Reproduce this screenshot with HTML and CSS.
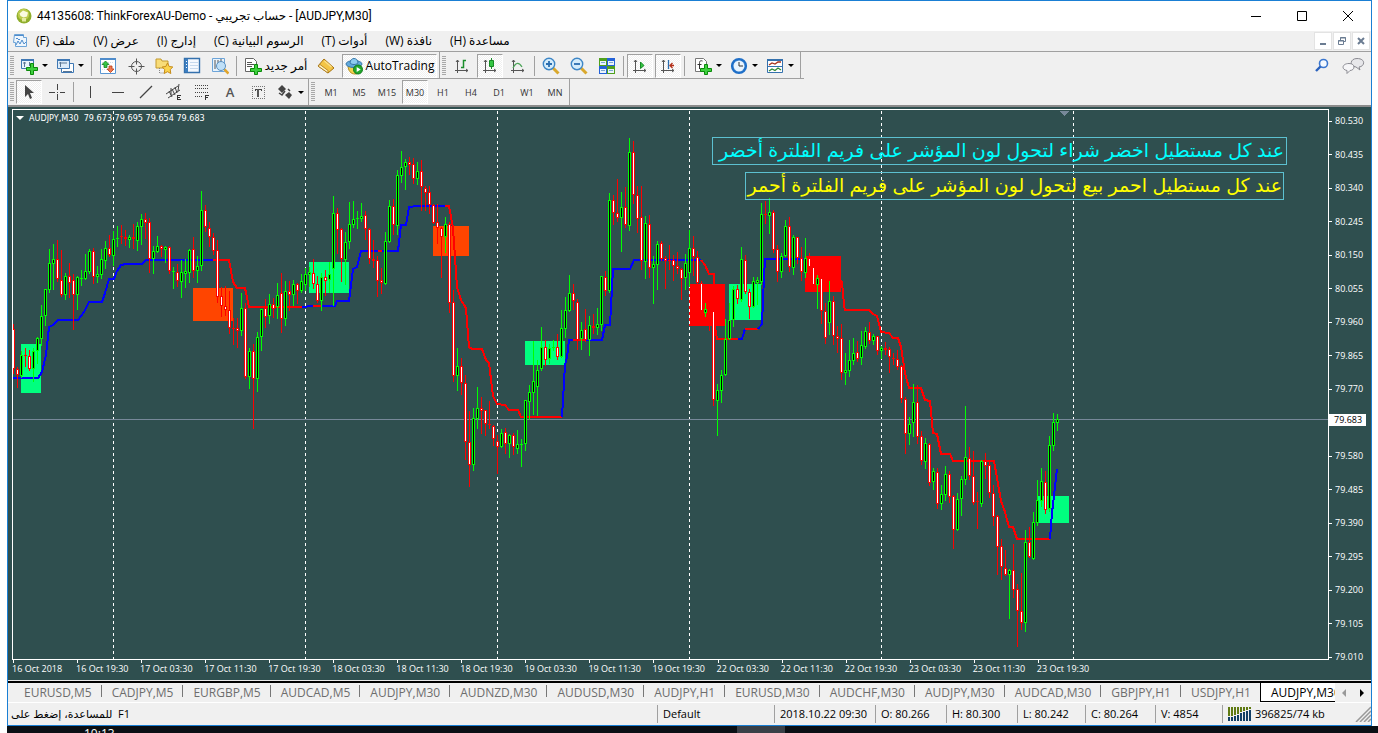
FILE: index.html
```html
<!DOCTYPE html>
<html lang="ar">
<head>
<meta charset="utf-8">
<title>44135608: ThinkForexAU-Demo - [AUDJPY,M30]</title>
<link rel="stylesheet" href="styles.css">
</head>
<body>
<div class="window">
  <header class="titlebar">
    <svg class="app-icon" viewBox="0 0 16 16"><circle cx="8" cy="8" r="7.500" fill="#8fae2c"/><circle cx="7.500" cy="6.500" r="5.700" fill="#bccb4c"/><path d="M3.500 5.500l3.500-3 5 2-1 4-3.500 1-3-1.500z" fill="#fafbe0"/><path d="M6 10h4v3.500H6z" fill="#e4eba0"/></svg>
    <h1 class="title">44135608: ThinkForexAU-Demo - حساب تجريبي - [AUDJPY,M30]</h1>
    <div class="caption">
      <button class="cap" aria-label="Minimize"><svg viewBox="0 0 12 12"><path d="M1 6.500h10" stroke="#000"/></svg></button>
      <button class="cap" aria-label="Maximize"><svg viewBox="0 0 12 12"><path d="M1.500 1.500h9v9h-9z" fill="none" stroke="#000"/></svg></button>
      <button class="cap" aria-label="Close"><svg viewBox="0 0 12 12"><path d="M1 1l10 10M11 1L1 11" stroke="#000"/></svg></button>
    </div>
  </header>

  <nav class="menubar">
    <svg class="doc-icon" viewBox="0 0 16 16"><path d="M2.500 1.500h9v3h3v9h-11v-4h-2z" fill="#eef6fd" stroke="#6da4d8"/><path d="M2.500 2.500h9M4 12l2-4 2 3 2-4 2 4 2-2M4 6l1-1 2 2 1-1" fill="none" stroke="#4f8ccb"/></svg>
    <button class="menu" dir="rtl">ملف (F)</button>
    <button class="menu" dir="rtl">عرض (V)</button>
    <button class="menu" dir="rtl">إدارج (I)</button>
    <button class="menu" dir="rtl">الرسوم البيانية (C)</button>
    <button class="menu" dir="rtl">أدوات (T)</button>
    <button class="menu" dir="rtl">نافذة (W)</button>
    <button class="menu" dir="rtl">مساعدة (H)</button>
    <div class="mdi">
      <button class="mdi-btn" aria-label="Minimize chart"><svg viewBox="0 0 10 10"><path d="M2 8h6" stroke="#6b7c92" stroke-width="2"/></svg></button>
      <button class="mdi-btn" aria-label="Restore chart"><svg viewBox="0 0 10 10"><path d="M3.500 4V1.500h5v4H7M1.500 4.500h5v4h-5zM1 5h6M3 2h6" fill="none" stroke="#6b7c92"/></svg></button>
      <button class="mdi-btn" aria-label="Close chart"><svg viewBox="0 0 10 10"><path d="M2 2l6 6M8 2L2 8" stroke="#6b7c92" stroke-width="2"/></svg></button>
    </div>
  </nav>

  <div class="tools">
    <div class="bar">
      <i class="grip"></i>
      <button class="tool drop" aria-label="New chart"><svg viewBox="0 0 18 18"><path d="M1.500 2.500h12v9h-12z" fill="#e8f3fc" stroke="#3f78b4"/><path d="M1 3h13" stroke="#3f78b4" stroke-width="2"/><path d="M4.500 5v5M3 6h3M9.500 5v4" stroke="#5b7794"/><path d="M10.500 6.500h3v4h4v3h-4v4h-3v-4h-4v-3h4z" fill="#3ed03e" stroke="#0b8a0b"/></svg><i class="caret"></i></button>
      <button class="tool drop" aria-label="Profiles"><svg viewBox="0 0 18 18"><path d="M5.500 6.500h12v9h-12z" fill="#fff" stroke="#3f78b4"/><path d="M1.500 2.500h12v9h-12z" fill="#dcecfa" stroke="#3f78b4"/><path d="M1 3h13" stroke="#3f78b4" stroke-width="2"/><path d="M4.500 5v5M3 6h8M7 14.500h9" stroke="#5b7794"/></svg><i class="caret"></i></button>
      <i class="sep first"></i>
      <button class="tool" aria-label="Market watch"><svg viewBox="0 0 18 18"><path d="M1.500 1.500h15v15h-15z" fill="#fff" stroke="#5b97d3"/><path d="M1 2h16" stroke="#4f8ccb" stroke-width="2"/><path d="M3 5.500h12M3 12.500h12" stroke="#d3dfeb" stroke-dasharray="1 1"/><path d="M6.500 4l3.500 3.500H8v3H5v-3H3z" fill="#35c643" stroke="#157f20" stroke-width=".8"/><path d="M11.500 15.500L8 12h2V9h3v3h2z" fill="#f07a50" stroke="#b93a16" stroke-width=".8"/></svg></button>
      <button class="tool" aria-label="Data window"><svg viewBox="0 0 18 18" fill="none" stroke="#555"><circle cx="9.500" cy="9.500" r="5"/><path d="M9.500 1.500v6M9.500 11.500v6M1.500 9.500h6M11.500 9.500h6"/></svg></button>
      <button class="tool" aria-label="Navigator"><svg viewBox="0 0 18 18"><path d="M1 2h5l1 2h6v7H1z" fill="#f8dc78" stroke="#c39a2e"/><path d="M4.500 11v5h4" fill="none" stroke="#888" stroke-dasharray="1 1"/><path d="M12.500 6l1.700 3.500 3.600.5-2.600 2.600.6 3.900-3.300-1.800-3.300 1.800.6-3.900L7.200 10l3.600-.5z" fill="#fbd44e" stroke="#c58a17"/></svg></button>
      <button class="tool" aria-label="Terminal"><svg viewBox="0 0 18 18"><path d="M1.500 1.500h15v14h-15z" fill="#f4f9ff" stroke="#3571ad" stroke-width="1.400"/><path d="M2 2h3v13H2z" fill="#3d7fc2"/><path d="M7 5.500h8M7 8.500h8M7 11.500h8" stroke="#c5d9ee"/><path d="M3 4.500h1M3 7.500h1M3 10.500h1" stroke="#fff"/></svg></button>
      <button class="tool" aria-label="Strategy tester"><svg viewBox="0 0 18 18"><path d="M1.500 1.500h12v13h-12z" fill="#e8f3fc" stroke="#6da4d8"/><path d="M4 3v9M7 3v4M10 2v4" stroke="#555"/><circle cx="10" cy="9" r="4.500" fill="#bfe0f8" stroke="#5a8fbf"/><path d="M13.500 12.500l4 4" stroke="#e0a52c" stroke-width="2.500"/></svg></button>
      <i class="sep"></i>
      <button class="tool order"><svg viewBox="0 0 18 18"><path d="M1.500 1.500h8l3 3v10h-11z" fill="#fff" stroke="#666"/><path d="M3 5.500h5M3 7.500h7M3 9.500h5" stroke="#555"/><path d="M10.500 7.500h3v4h4v3h-4v3h-3v-3h-4v-3h4z" fill="#3ed03e" stroke="#0b8a0b"/></svg><span>أمر جديد</span></button>
      <button class="tool" aria-label="MetaEditor"><svg viewBox="0 0 18 18"><path d="M7 2l10 9-6 5L1 9z" fill="#f3c545" stroke="#a87412"/><path d="M1 9l10 7v-2.500L3 7.500z" fill="#fff3c0" stroke="#a87412" stroke-width=".8"/><path d="M7.500 4l7 6" stroke="#fbe08a" stroke-width="1.500"/></svg></button>
      <button class="tool auto pressed"><svg viewBox="0 0 18 18"><path d="M3 8c0 6 3 9 7 9s5-4 6-9z" fill="#f1d14d" stroke="#b88d1c"/><ellipse cx="9" cy="7" rx="8" ry="3.500" fill="#61a9dc" stroke="#3777a8"/><path d="M5 6c0-6 8-6 8 0-2 2-6 2-8 0z" fill="#8fcbf0" stroke="#3777a8"/><circle cx="13" cy="12.500" r="4.500" fill="#22a92c" stroke="#117a1b"/><path d="M11.700 10l4 2.500-4 2.500z" fill="#fff"/></svg><span>AutoTrading</span></button>
      <i class="edge"></i><i class="grip"></i>
      <button class="tool" aria-label="Bar chart"><svg viewBox="0 0 18 18" fill="none" stroke="#555"><path d="M4.500 3v13M2 13.500h13M3 5l1.500-2L6 5M13 12l2 1.500-2 1.500"/><path d="M8 10.500h2.500V3.500H13" stroke="#1c8e2c" stroke-width="1.500"/></svg></button>
      <button class="tool pressed" aria-label="Candlesticks"><svg viewBox="0 0 18 18" fill="none" stroke="#555"><path d="M4.500 3v13M2 13.500h13M3 5l1.500-2L6 5M13 12l2 1.500-2 1.500"/><path d="M10.500 1v11" stroke="#1c8e2c"/><path d="M8.500 3.500h4v6h-4z" fill="#35c643" stroke="#168a24"/></svg></button>
      <button class="tool" aria-label="Line chart"><svg viewBox="0 0 18 18" fill="none" stroke="#555"><path d="M4.500 3v13M2 13.500h13M3 5l1.500-2L6 5M13 12l2 1.500-2 1.500"/><path d="M4 11c3-6 6-6 9-1" stroke="#4ba457" stroke-width="1.300"/></svg></button>
      <i class="sep"></i>
      <button class="tool" aria-label="Zoom in"><svg viewBox="0 0 18 18"><path d="M11 11l5.500 5.500" stroke="#d9a82d" stroke-width="3"/><circle cx="7" cy="7" r="5.700" fill="#d4ecfb" stroke="#3d86c6" stroke-width="1.400"/><path d="M4 7h6M7 4v6" stroke="#2b6eb0" stroke-width="1.800"/></svg></button>
      <button class="tool" aria-label="Zoom out"><svg viewBox="0 0 18 18"><path d="M11 11l5.500 5.500" stroke="#d9a82d" stroke-width="3"/><circle cx="7" cy="7" r="5.700" fill="#d4ecfb" stroke="#3d86c6" stroke-width="1.400"/><path d="M4 7h6" stroke="#2b6eb0" stroke-width="1.800"/></svg></button>
      <button class="tool" aria-label="Tile windows"><svg viewBox="0 0 18 18"><path d="M1 1h8v8H1zM9 9h8v8H9z" fill="#4fa01c"/><path d="M9 1h8v8H9zM1 9h8v8H1z" fill="#2361d8"/><path d="M2 4h6v4H2zM10 4h6v4h-6zM2 12h6v4H2zM10 12h6v4h-6z" fill="#eaf2fb"/><path d="M3 5.500h4M11 5.500h4M3 13.500h4M11 13.500h4" stroke="#7da7cf"/></svg></button>
      <i class="sep"></i>
      <button class="tool pressed" aria-label="Auto scroll"><svg viewBox="0 0 18 18" fill="none" stroke="#555"><path d="M4.500 3v13M2 13.500h13M3 5l1.500-2L6 5M13 12l2 1.500-2 1.500"/><path d="M9.500 5l3.500 3.500-3.500 3z" fill="#35c643" stroke="#168a24"/></svg></button>
      <button class="tool pressed" aria-label="Chart shift"><svg viewBox="0 0 18 18" fill="none" stroke="#555"><path d="M4.500 3v13M2 13.500h13M3 5l1.500-2L6 5M13 12l2 1.500-2 1.500"/><path d="M9.500 3v9" stroke="#2b6eb0" stroke-width="1.300"/><path d="M15 8.500h-4M13.500 6L11 8.500l2.500 2.500" stroke="#b4301a" stroke-width="1.300"/></svg></button>
      <i class="sep wide"></i>
      <button class="tool drop" aria-label="Indicators"><svg viewBox="0 0 18 18"><path d="M1.500 1.500h8l3 3v10h-11z" fill="#fff" stroke="#777"/><path d="M8.500 4c-3-1-3 1-3 3v5M3.500 7.500h4" fill="none" stroke="#333"/><path d="M10.500 7.500h3v4h4v3h-4v3h-3v-3h-4v-3h4z" fill="#3ed03e" stroke="#0b8a0b"/></svg><i class="caret"></i></button>
      <button class="tool drop" aria-label="Periods"><svg viewBox="0 0 18 18"><circle cx="9" cy="9" r="6.800" fill="#eaf5ff" stroke="#1f6fc8" stroke-width="2.600"/><path d="M9 5v4h4" fill="none" stroke="#333"/><circle cx="9" cy="9" r="5.500" fill="none" stroke="#8bb9e6" stroke-dasharray="1 3.300"/></svg><i class="caret"></i></button>
      <button class="tool drop" aria-label="Templates"><svg viewBox="0 0 18 18"><path d="M1.500 2.500h15v13h-15z" fill="#fff" stroke="#3571ad"/><path d="M1 3h16" stroke="#3571ad" stroke-width="2"/><path d="M2 9.500h14" stroke="#3571ad"/><path d="M3 8l3-2 3 1 3-2h3" fill="none" stroke="#a8321c" stroke-width="1.300"/><path d="M3 14l3-2 3 1.500 3-2.500 3 2" fill="none" stroke="#2f8b35" stroke-width="1.300"/></svg><i class="caret"></i></button>
      <i class="edge"></i>
      <div class="right-tools">
        <button class="tool" aria-label="Search"><svg viewBox="0 0 18 18"><circle cx="10.500" cy="6.500" r="4" fill="#f4f9ff" stroke="#3b77cf" stroke-width="1.600"/><path d="M7.500 9.500L3 14" stroke="#2b62bd" stroke-width="2.400"/></svg></button>
        <button class="tool chat" aria-label="Messages"><svg viewBox="0 0 24 18"><path d="M15 1.500c9 0 8 8 2 8.500l1 3-4-3c-7-1-6-8.500 1-8.500z" fill="#e7e7ea" stroke="#8b8b92"/><path d="M7 6.500c7 0 6 7 1 7l-3 3v-3c-6-1-5-7 2-7z" fill="#f6f6f8" stroke="#8b8b92"/></svg></button>
      </div>
    </div>
    <div class="bar">
      <i class="grip"></i>
      <button class="tool pressed cursor" aria-label="Cursor"><svg viewBox="0 0 18 18"><path d="M5 2v12l3-3 2 5 2-1-2-5h4z" fill="#444"/></svg></button>
      <button class="tool" aria-label="Crosshair"><svg viewBox="0 0 18 18"><path d="M9.500 1v6M9.500 11v6M1 9.500h6M12 9.500h5M9 9.500h1" stroke="#444"/></svg></button>
      <i class="sep"></i>
      <button class="tool" aria-label="Vertical line"><svg viewBox="0 0 18 18"><path d="M9.500 3v12" stroke="#444"/></svg></button>
      <button class="tool" aria-label="Horizontal line"><svg viewBox="0 0 18 18"><path d="M3 9.500h12" stroke="#444"/></svg></button>
      <button class="tool" aria-label="Trendline"><svg viewBox="0 0 18 18"><path d="M3 15L15 3" stroke="#444" stroke-width="1.200"/></svg></button>
      <button class="tool" aria-label="Channel"><svg viewBox="0 0 18 18"><path d="M1 11L13 3M3 15l12-8M4 8l3 6M7 6l3 6M10 4l2 6M14 1l-1 7M6 5v7" stroke="#444"/><path d="M12.500 12v5M12 12.500h4M12 14.500h3M12 16.500h4" stroke="#333"/></svg></button>
      <button class="tool" aria-label="Fibonacci"><svg viewBox="0 0 18 18"><path d="M2 2.500h14M2 5.500h14M2 9.500h14M2 13.500h8" stroke="#444" stroke-dasharray="1 1"/><path d="M12.500 12v5M12 12.500h4M12 14.500h3" stroke="#333"/></svg></button>
      <button class="tool letter">A</button>
      <button class="tool" aria-label="Text label"><svg viewBox="0 0 18 18" shape-rendering="crispEdges"><path d="M3 3.500h13M3 15.500h13M3.500 3v13M15.500 3v13" fill="none" stroke="#777" stroke-dasharray="1 1"/><path d="M6 6.500h7M9.500 6v8M6.500 6v2M12.500 6v2" stroke="#444"/><path d="M8 6h2v8H8z" fill="#555"/></svg></button>
      <button class="tool drop" aria-label="Arrows"><svg viewBox="0 0 18 18"><path d="M2 6l4-4 4 4-4 4zM9 12l4-3 3 3-3 4z" fill="#444"/><path d="M3 10l3 2 3-4M12 6l2 2" fill="none" stroke="#444" stroke-width="1.500"/></svg><i class="caret"></i></button>
      <i class="edge"></i><i class="grip"></i>
      <button class="tool tf">M1</button><button class="tool tf">M5</button><button class="tool tf">M15</button><button class="tool tf pressed">M30</button><button class="tool tf">H1</button><button class="tool tf">H4</button><button class="tool tf">D1</button><button class="tool tf">W1</button><button class="tool tf">MN</button>
      <i class="edge"></i>
    </div>
  </div>

  <main class="chart">
    <div class="plot">
      <svg id="plot" class="plot-svg" viewBox="12 109 1317 551" preserveAspectRatio="none"></svg>
      <p class="symbol"><i class="caret light"></i><span>AUDJPY,M30&nbsp; 79.673 79.695 79.654 79.683</span></p>
      <p class="note buy" dir="rtl">عند كل مستطيل اخضر شراء لتحول لون المؤشر على فريم الفلترة أخضر</p>
      <p class="note sell" dir="rtl">عند كل مستطيل احمر بيع لتحول لون المؤشر على فريم الفلترة أحمر</p>
    </div>
    <div class="prices">
      <span>80.530</span><span>80.435</span><span>80.340</span><span>80.245</span><span>80.150</span><span>80.055</span><span>79.960</span><span>79.865</span><span>79.770</span><span class="skip"></span><span>79.580</span><span>79.485</span><span>79.390</span><span>79.295</span><span>79.200</span><span>79.105</span><span>79.010</span>
      <b class="tag">79.683</b>
    </div>
    <div class="times">
      <span>16 Oct 2018</span><span>16 Oct 19:30</span><span>17 Oct 03:30</span><span>17 Oct 11:30</span><span>17 Oct 19:30</span><span>18 Oct 03:30</span><span>18 Oct 11:30</span><span>18 Oct 19:30</span><span>19 Oct 03:30</span><span>19 Oct 11:30</span><span>19 Oct 19:30</span><span>22 Oct 03:30</span><span>22 Oct 11:30</span><span>22 Oct 19:30</span><span>23 Oct 03:30</span><span>23 Oct 11:30</span><span>23 Oct 19:30</span>
    </div>
  </main>

  <nav class="tabs">
    <div class="tab-list">
      <button class="tab">EURUSD,M5</button><button class="tab">CADJPY,M5</button><button class="tab">EURGBP,M5</button><button class="tab">AUDCAD,M5</button><button class="tab">AUDJPY,M30</button><button class="tab">AUDNZD,M30</button><button class="tab">AUDUSD,M30</button><button class="tab">AUDJPY,H1</button><button class="tab">EURUSD,M30</button><button class="tab">AUDCHF,M30</button><button class="tab">AUDJPY,M30</button><button class="tab">AUDCAD,M30</button><button class="tab">GBPJPY,H1</button><button class="tab">USDJPY,H1</button><button class="tab active">AUDJPY,M30</button>
    </div>
    <button class="scroll" aria-label="Scroll left"><svg viewBox="0 0 6 8"><path d="M5 0v8L1 4z" fill="#999"/></svg></button>
    <button class="scroll" aria-label="Scroll right"><svg viewBox="0 0 6 8"><path d="M1 0v8l4-4z" fill="#000"/></svg></button>
  </nav>

  <footer class="status">
    <span class="help">للمساعدة، إضغط على&nbsp; F1</span><span>Default</span><span>2018.10.22 09:30</span><span>O: 80.266</span><span>H: 80.300</span><span>L: 80.242</span><span>C: 80.264</span><span>V: 4854</span>
    <span class="net"><svg class="signal" viewBox="0 0 23 14" shape-rendering="crispEdges"><path d="M1 0v9M4 0v9M7 0v8M10 0v7M13 0v5M16 0v4M19 0v3M22 0v2" stroke="#5f7a12" stroke-width="2"/><path d="M1 10v4M4 10v4M7 9v5M10 8v6M13 6v8M16 5v9M19 4v10M22 3v11" stroke="#123f66" stroke-width="2"/></svg>396825/74 kb<svg class="size-grip" viewBox="0 0 16 16"><path d="M1 16L16 1M5 16L16 5M9 16l7-7M13 16l3-3" stroke="#999" stroke-width="1.500"/></svg></span>
  </footer>
</div>
<div class="taskbar"><span class="clock">10:13</span><i class="task"></i></div>
<script src="chart.js"></script>
</body>
</html>
```
FILE: styles.css
```css
* { box-sizing: border-box; }
html, body { margin: 0; height: 100%; }
body { display: flex; flex-direction: column; overflow: hidden; background: #fff; font-family: "Open Sans", "Noto Sans", "DejaVu Sans", sans-serif; font-size: 12px; color: #000; }
button { margin: 0; padding: 0; border: 0; background: none; font: inherit; color: inherit; }
p, h1 { margin: 0; }
svg { display: block; }
.window { flex: 1; min-height: 0; display: flex; flex-direction: column; margin: 0 6px 0 7px; border: 1px solid #1a7fd4; background: #f0f0f0; }

.titlebar { display: flex; align-items: center; height: 30px; padding-left: 8px; background: #fff; }
.app-icon { width: 16px; height: 16px; margin-right: 5px; }
.title { font-family: Roboto, "DejaVu Sans", sans-serif; font-size: 12px; font-weight: 400; line-height: 30px; white-space: nowrap; }
.caption { display: flex; margin-left: auto; }
.cap { display: flex; justify-content: center; align-items: center; width: 46px; height: 30px; }
.cap svg { width: 12px; height: 12px; }

.menubar { display: flex; align-items: center; height: 21px; padding-left: 4px; border-bottom: 1px solid #a0a0a0; }
.doc-icon { width: 16px; height: 16px; margin-right: 8px; }
.menu { margin-right: 18px; line-height: 20px; white-space: nowrap; }
.mdi { display: flex; gap: 1px; margin-left: auto; padding-right: 1px; }
.mdi-btn { display: flex; justify-content: center; align-items: center; width: 18px; height: 18px; background: #fff; border: 1px solid #e3e3e3; }
.mdi-btn svg { width: 10px; height: 10px; }

.tools { border-bottom: 2px solid #8c8c8c; }
.bar { display: flex; align-items: center; height: 27px; }
.bar + .bar { height: 26px; }
.bar:first-child { background: linear-gradient(#a0a0a0, #a0a0a0) 0 100% / 796px 1px no-repeat; }
.grip { width: 4px; height: 20px; margin: 0 2px; background: repeating-linear-gradient(#a8a8a8 0 1px, #f0f0f0 1px 2px); }
.sep { width: 1px; height: 20px; margin: 0 2px; background: #a0a0a0; }
.sep.first { margin-left: 3px; }
.sep.wide { margin-right: 5px; }
.edge { width: 1px; height: 100%; margin-left: 2px; background: #a0a0a0; }
.bar + .bar .edge { margin-left: 0; }
.tool { display: flex; flex: none; justify-content: center; align-items: center; width: 28px; height: 24px; }
.tool svg { width: 18px; height: 18px; flex: none; }
.drop { width: 36px; gap: 4px; }
.caret { width: 0; height: 0; border: 3px solid transparent; border-top-color: #000; border-bottom: 0; }
.caret.light { border-width: 4px; border-top-color: #fff; border-bottom: 0; }
.pressed { width: 26px; margin: 0 1px; background: repeating-conic-gradient(#fff 0 25%, #f0f0f0 0 50%) 0 0 / 2px 2px; border: 1px solid #fff; border-top-color: #a0a0a0; border-left-color: #a0a0a0; }
.cursor { margin-left: 0; }
.order { width: 73px; gap: 3px; white-space: nowrap; }
.auto { width: 95px; gap: 3px; margin: 0 0 0 2px; }
.letter { color: #555; font-weight: 600; font-size: 13px; }
.tf { font-size: 9px; color: #333; }
.right-tools { display: flex; gap: 4px; margin-left: auto; padding-right: 3px; }
.chat svg { width: 24px; }

.chart { flex: 1; min-height: 0; display: grid; grid-template: minmax(0, 1fr) 20px / minmax(0, 1fr) 42px; padding: 2px 0 0 4px; background: #2f4f4f; border-bottom: 1px solid #e8e8e8; color: #fff; font-size: 9px; }
.plot { position: relative; }
.plot-svg { width: 100%; height: 100%; }
.symbol { position: absolute; left: 4px; top: 2px; display: flex; align-items: center; gap: 5px; line-height: 14px; white-space: nowrap; font-family: "DejaVu Sans Condensed", "Open Sans", sans-serif; font-size: 9px; }
.note { position: absolute; height: 28px; border: 1px solid #5cc0d0; line-height: 26px; font-family: "Liberation Sans", "DejaVu Sans", sans-serif; font-size: 19px; white-space: nowrap; }
.buy { top: 28px; right: 42px; padding: 0 2px 0 6px; color: #0ff; }
.sell { top: 63px; right: 45px; padding: 0 1px; color: #ff0; }
.prices { position: relative; display: flex; flex-direction: column; justify-content: space-between; padding: 7px 0 0; margin-bottom: -2px; }
.prices span { display: flex; align-items: center; height: 10px; line-height: 10px; gap: 3px; }
.prices span::before { content: ""; width: 3px; height: 1px; background: #fff; }
.prices .skip { visibility: hidden; }
.tag { position: absolute; left: 0; right: 5px; top: 56%; height: 12px; margin-top: -5px; padding-left: 5px; background: #fff; color: #000; line-height: 12px; font-weight: 400; }
.times { display: grid; grid-template-columns: repeat(17, 64fr) 228fr; }
.times span { position: relative; line-height: 18px; white-space: nowrap; }
.times span::before { content: ""; position: absolute; left: 1px; top: 0; width: 1px; height: 3px; background: #fff; }

.tabs { display: flex; height: 21px; border-top: 2px solid #000; color: #6d6d6d; }
.tab-list { flex: 1; min-width: 0; display: flex; overflow: hidden; padding-left: 6px; }
.tab { position: relative; flex: none; padding: 0 10px; line-height: 17px; font-size: 12px; }
.tab::after { content: ""; position: absolute; right: 0; top: 2px; width: 1px; height: 12px; background: #777; }
.tab.active { background: #fff; color: #000; border: 1px solid #000; border-top: 0; margin-left: -1px; }
.scroll { display: flex; justify-content: center; align-items: center; width: 18px; }
.scroll svg { width: 6px; height: 8px; }

.status { display: grid; grid-template-columns: minmax(0, 1fr) 117px 101px 71px 71px 68px 70px 67px 149px; align-items: center; height: 23px; border-top: 1px solid #fff; font-size: 11px; white-space: nowrap; }
.status > span { padding-left: 5px; line-height: 18px; border-left: 1px solid #a0a0a0; }
.status > .help { border: 0; padding-left: 3px; }
.status > .net { display: flex; align-items: center; gap: 4px; }
.signal { width: 23px; height: 14px; }
.size-grip { width: 16px; height: 16px; margin-left: auto; }
.taskbar { display: flex; height: 7px; margin: 0 0 0 7px; overflow: hidden; background: #0a0f14; color: #fff; }
.clock { width: 730px; padding-left: 77px; line-height: 16px; }
.task { width: 48px; background: #3a4047; }
```
FILE: chart.js
```js
// Each bar: direction, high, body top, body bottom, low. Bars are 4 units apart.
const bars = `r324,329,369,373 r367,369,375,387 g351,355,376,377 r348,355,356,366 r350,356,369,370 g348,351,369,381 g337,338,351,363 g305,316,339,345 g289,289,316,325 g249,263,290,292
g244,259,264,289 r240,259,279,281 r250,280,295,296 g273,276,295,299 r263,276,283,297 r274,280,295,329 g276,277,295,309 g270,278,278,285 g254,271,279,279 g249,251,272,273
r248,251,277,283 g266,274,277,282 g249,259,275,278 g241,248,261,268 r235,248,255,256 g231,239,256,265 g226,238,239,246 r225,236,237,243 r230,237,239,245 g235,237,240,247
r224,237,239,248 g222,226,241,250 g214,219,227,244 r213,219,223,238 r218,222,259,272 g246,251,259,273 g236,246,252,252 r245,246,249,256 g246,247,250,262 r246,247,271,273
g267,271,272,288 r264,272,281,286 g260,272,282,297 g259,271,274,287 g249,250,273,282 r237,249,271,277 g256,266,271,282 g191,210,266,270 r205,210,227,231 r222,228,237,246
r233,237,251,254 r240,250,297,302 r287,296,306,316 r286,306,310,315 r291,310,328,333 r318,328,329,344 r318,328,331,347 g293,308,331,335 r303,308,377,378 g348,351,377,388
r344,351,379,428 g332,337,379,391 g309,309,337,350 r299,308,317,327 g294,304,316,323 r298,304,309,317 g283,295,307,318 r273,293,319,332 g281,291,319,325 r281,291,295,310
g280,284,295,305 r283,284,291,303 g274,281,291,292 g268,274,285,290 g267,272,275,286 r259,273,284,288 r276,284,301,302 g273,277,301,310 r270,277,281,295 g262,274,280,292
g196,213,269,305 r208,213,230,253 r228,229,259,281 g232,242,260,284 g202,224,242,248 g201,219,225,227 g211,218,218,228 g203,216,219,221 r211,215,229,239 r228,229,259,263
r240,259,261,267 r256,260,281,296 r268,280,283,293 g232,241,284,284 g200,206,242,242 r199,206,225,234 g170,175,226,234 g151,167,176,182 g159,162,167,189 r157,162,165,174
r158,164,179,183 g162,171,179,184 r160,171,187,210 r186,188,193,210 r186,192,205,213 r204,205,223,223 r204,222,228,243 r227,228,237,277 g217,224,237,252 r222,224,303,312
r290,302,376,381 g348,366,376,390 r358,366,383,394 r375,383,442,459 r411,442,465,486 g408,418,465,470 g387,408,419,428 r397,408,411,433 r410,410,424,435 r401,424,425,428
r425,426,439,445 r435,441,447,473 g429,433,447,447 r428,432,444,453 g434,435,444,457 r433,435,447,454 g430,444,449,453 g439,444,445,466 g400,400,444,450 g385,392,402,419
g341,381,393,414 g360,370,387,415 g327,347,369,370 r340,347,360,365 g344,348,359,363 g340,347,348,350 r334,347,357,359 g310,328,357,357 g297,310,329,337 g275,293,311,311
r284,293,301,309 r299,302,340,349 g322,330,339,349 r309,329,340,341 g316,325,340,355 r314,326,328,333 g308,324,328,334 g276,276,325,330 r271,277,291,295 g193,200,291,292
r195,200,213,224 r179,213,218,221 g192,207,218,251 r187,207,225,227 g138,152,226,230 r141,152,195,203 r186,195,219,232 r186,217,261,269 g216,223,262,278 r215,224,268,277
g256,264,268,303 g241,244,265,289 r241,243,259,260 r256,258,261,288 r245,260,261,269 r255,260,266,280 r252,266,269,273 r268,269,279,299 g254,263,278,289 g230,248,273,286
r236,248,257,275 r251,257,283,284 r281,283,311,311 g303,309,313,316 r309,312,313,330 r310,311,400,405 g384,390,401,435 g370,375,391,402 g319,339,375,375 g303,320,339,339
g286,289,320,326 r285,289,299,303 g247,259,300,301 r255,260,292,293 r289,292,307,318 g277,281,307,307 g277,280,283,304 g203,214,282,284 r201,214,215,223 g198,212,216,233
r210,212,250,252 r245,249,272,281 g253,256,272,277 g220,226,256,256 r217,226,267,271 g235,237,268,274 r237,237,258,263 r247,258,272,280 g238,258,273,277 r253,258,267,268
r267,267,285,285 g275,278,285,308 r278,278,311,323 r303,311,338,343 g281,301,323,334 r296,301,336,344 r326,336,339,352 r324,338,373,379 g353,370,373,384 g340,360,371,376
g338,353,361,364 r341,352,359,361 g331,345,358,364 g327,331,347,348 r322,332,341,343 g334,336,341,344 r336,336,351,354 g346,348,351,358 r342,348,350,354 r347,349,357,372
r353,358,359,364 r350,359,367,369 r365,366,399,402 r397,399,434,453 g417,424,434,444 g384,402,423,436 r385,402,437,443 r431,436,461,464 g438,443,462,468 r443,444,483,485
g468,471,482,489 r468,472,504,508 g485,494,504,509 g466,474,495,500 r471,474,497,502 r495,496,530,548 g493,499,530,530 g476,479,499,515 g406,457,480,484 r447,458,476,479
r451,476,503,504 r492,501,502,528 g460,461,504,506 r453,461,466,478 r462,465,493,497 r485,493,517,525 r515,516,547,574 r539,546,567,579 r550,568,575,575 g569,570,575,618
r544,570,590,597 r584,589,611,646 r573,611,623,629 g530,542,623,631 r527,542,557,557 g512,522,559,559 g480,500,523,525 g468,481,501,506 r471,482,510,513 g436,445,509,511
g413,422,446,450 g414,419,423,430`.split(/\s+/);

const zones = [
  [21, 344, 20, 49, '#00ff7f'], [193, 288, 40, 33, '#ff4500'], [309, 262, 40, 31, '#00ff7f'],
  [433, 226, 36, 30, '#ff4500'], [525, 341, 40, 24, '#00ff7f'], [689, 284, 36, 42, '#ff0000'],
  [729, 284, 32, 36, '#00ff7f'], [805, 256, 36, 36, '#ff0000'], [1037, 496, 32, 27, '#00ff7f']
];

const trend = [
  ['b', '13,378 38,378 42,372 46,355 49,327 53,325 58,320 78,320 84,312 89,302 102,302 105,293 109,279 114,279 117,271 121,265 126,264 142,264 146,260 213,260'],
  ['r', '213,260 229,260 233,282 237,288 245,288 249,307 302,307'],
  ['b', '302,307 313,306'], ['r', '313,306 321,306'],
  ['b', '321,306 335,306 337,301 349,301 353,269 357,267 361,251 378,251'],
  ['r', '378,251 382,251'],
  ['b', '382,251 398,251 401,225 406,225 409,207 418,206 445,206'],
  ['r', '445,206 449,206 451,217 453,228 455,257 457,287 461,300 466,308 469,347 472,349 482,349 486,360 489,363 493,396 497,404 505,405 509,410 518,410 521,417 562,417'],
  ['b', '562,417 565,365 567,357 569,340 573,340'], ['r', '573,340 585,340'],
  ['b', '585,340 602,340 605,325 610,325 613,269 630,269 634,260 701,260'],
  ['r', '701,260 705,265 709,274 714,274 714,322 717,339 738,339'],
  ['b', '738,339 742,339 745,329'], ['r', '745,329 758,329'],
  ['b', '758,329 762,324 764,277 765,259 805,259'],
  ['r', '805,259 837,275 842,282 844,305 845,310 869,310 873,314 877,316 881,332 889,333 893,338 898,338 901,347 905,373 909,388 921,388 925,400 930,401 933,433 937,434 941,454 950,454 953,461 994,461 997,478 1001,501 1005,512 1009,527 1013,527 1017,539 1050,539'],
  ['b', '1050,539 1052,513 1057,469']
];

const rect = (x, y, w, h, fill) => `<rect x="${x}" y="${y}" width="${w}" height="${h}" fill="${fill}"/>`;
let out = '<g shape-rendering="crispEdges">';
for (const z of zones) out += rect(...z);
for (let x = 113; x < 1100; x += 192) {
  out += `<path d="M${x + 0.5} 111V659" stroke="#fff" stroke-dasharray="3 3"/>`;
}
out += rect(13, 419, 1315, 1, '#778899');
for (const [c, pts] of trend) {
  out += `<polyline points="${pts}" fill="none" stroke="${c === 'b' ? '#0000ff' : '#ff0000'}" stroke-width="2"/>`;
}
bars.forEach((bar, i) => {
  const x = 13 + i * 4;
  const up = bar[0] === 'g';
  const [h, t, b, l] = bar.slice(1).split(',').map(Number);
  const edge = up ? '#00ff00' : '#ff0000';
  out += rect(x, h, 1, l - h + 1, edge) + rect(x - 1, t, 3, Math.max(1, b - t), edge);
  if (b - t > 2) out += rect(x, t + 1, 1, b - t - 2, up ? '#000' : '#fff');
});
out += '<path d="M1059 111h10l-5 5z" fill="#778899"/>';
out += '<rect x="12.5" y="109.5" width="1316" height="550" fill="none" stroke="#fff"/></g>';
document.getElementById('plot').innerHTML = out;
```
